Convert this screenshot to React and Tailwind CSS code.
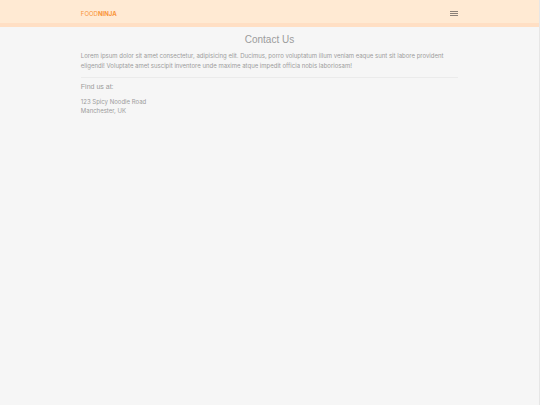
function MenuIcon() {
  return (
    <svg width="8" height="5" viewBox="0 0 8 5" fill="#8b8178" aria-hidden="true">
      <rect width="8" height="1" />
      <rect y="2" width="8" height="1" />
      <rect y="4" width="8" height="1" />
    </svg>
  );
}

function Header() {
  return (
    <header className="border-b-4 border-[#ffdfc4] bg-[#ffead3]">
      <nav className="mx-auto flex w-[70%] items-center justify-between pt-2 pb-1">
        <a href="/" className="text-[6px] leading-[11px] text-[#f9953a]">
          FOOD<b>NINJA</b>
        </a>
        <button type="button" aria-label="Open menu" className="flex h-[11px] items-center">
          <MenuIcon />
        </button>
      </nav>
    </header>
  );
}

function Contact() {
  return (
    <section className="mx-auto w-[70%] pt-[6px] text-[6px] leading-[10px]">
      <h1 className="text-center font-['Liberation_Sans',Arial,sans-serif] text-[10px] leading-[14px]">
        Contact Us
      </h1>
      <p className="mt-1">
        Lorem ipsum dolor sit amet consectetur, adipisicing elit. Ducimus, porro voluptatum
        illum veniam eaque sunt sit labore provident eligendi! Voluptate amet suscipit
        inventore unde maxime atque impedit officia nobis laboriosam!
      </p>
      <hr className="mt-[6px] border-[#ebebeb]" />
      <h2 className="mt-1 font-['Liberation_Sans',Arial,sans-serif] text-[7px] leading-[10px]">
        Find us at:
      </h2>
      <address className="mt-[5px] not-italic leading-[9px]">
        <p>123 Spicy Noodle Road</p>
        <p>Manchester, UK</p>
      </address>
    </section>
  );
}

export default function App() {
  return (
    <div className="min-h-screen border-r border-[#e6e6e6] bg-[#f6f6f6] font-[Inter,sans-serif] text-[#9c9c9c]">
      <Header />
      <main>
        <Contact />
      </main>
    </div>
  );
}
